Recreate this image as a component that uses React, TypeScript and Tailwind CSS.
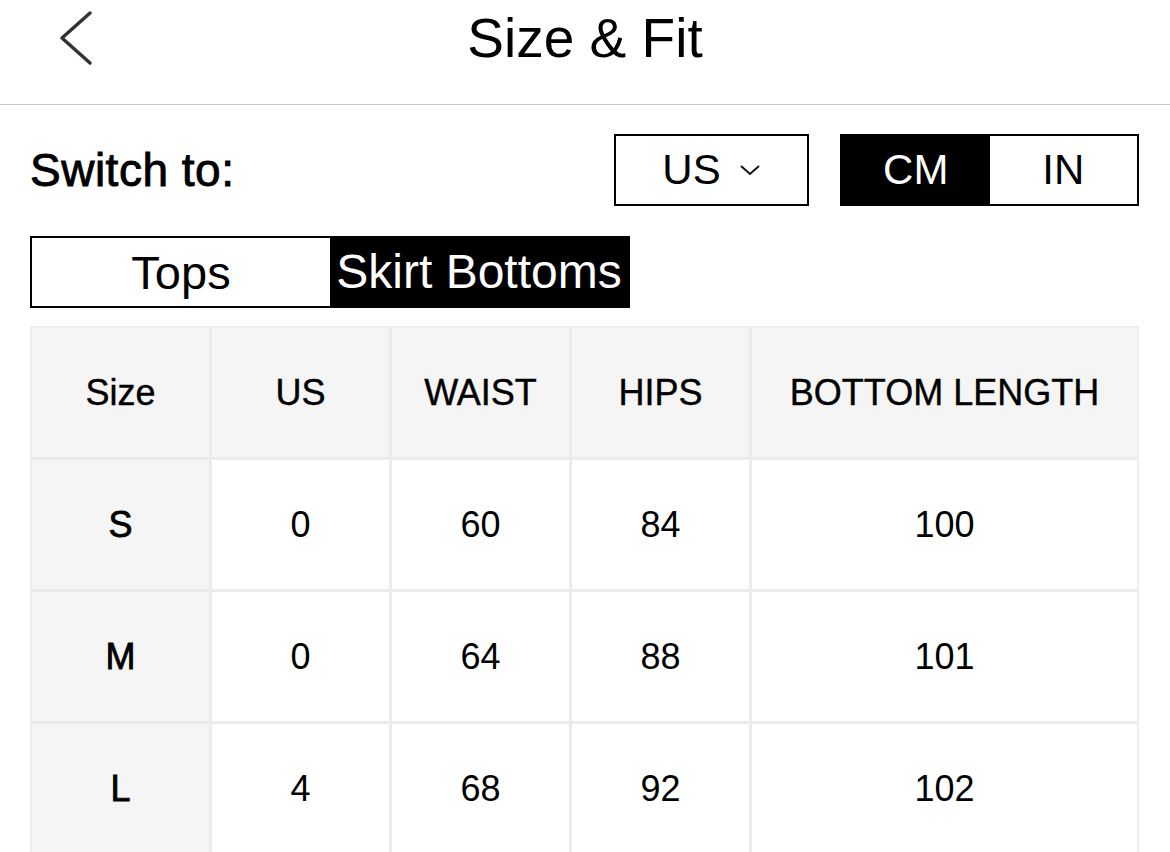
import { useState } from "react";

const rows = [
  { size: "S", us: "0", waist: "60", hips: "84", length: "100" },
  { size: "M", us: "0", waist: "64", hips: "88", length: "101" },
  { size: "L", us: "4", waist: "68", hips: "92", length: "102" },
];

const headers = ["Size", "US", "WAIST", "HIPS", "BOTTOM LENGTH"];

const App = () => {
  const [unit, setUnit] = useState<"CM" | "IN">("CM");
  const [tab, setTab] = useState<"tops" | "bottoms">("bottoms");

  return (
    <div
      className="w-[1170px] h-[852px] overflow-hidden bg-white text-black"
      style={{ fontFamily: '"Liberation Sans", Arial, sans-serif' }}
    >
      {/* header */}
      <div className="h-[105px] border-b border-[#c6c6c6] relative">
        <div className="h-[76px] flex items-center justify-center">
          <h1 className="text-[55px] leading-none font-normal">Size &amp; Fit</h1>
        </div>
        <button className="absolute left-[56px] top-[10px]">
          <svg width="40" height="56" viewBox="0 0 40 56" fill="none">
            <path
              d="M34 3 L6 28 L34 53"
              stroke="#333"
              strokeWidth="3.5"
              strokeLinecap="round"
              strokeLinejoin="round"
            />
          </svg>
        </button>
      </div>

      <div className="pl-[30px] pr-[31px]">
        {/* switch row */}
        <div className="mt-[29px] flex items-center h-[72px]">
          <span className="text-[46px] leading-none tracking-[0.5px] [-webkit-text-stroke:0.9px_black]">
            Switch to:
          </span>
          <div className="ml-auto flex gap-[31px]">
            <button className="w-[195px] h-[72px] border-2 border-black flex items-center justify-center gap-[18px]">
              <span className="text-[42px] leading-none">US</span>
              <svg width="22" height="14" viewBox="0 0 22 14" fill="none">
                <path d="M2 3 L11 11 L20 3" stroke="#111" strokeWidth="2" />
              </svg>
            </button>
            <div className="w-[299px] h-[72px] border-2 border-black flex">
              {(["CM", "IN"] as const).map((u) => (
                <button
                  key={u}
                  onClick={() => setUnit(u)}
                  className={
                    "flex-1 flex items-center justify-center text-[42px] leading-none " +
                    (unit === u ? "bg-black text-white" : "bg-white text-black")
                  }
                >
                  {u}
                </button>
              ))}
            </div>
          </div>
        </div>

        {/* tabs */}
        <div className="mt-[30px] w-[600px] h-[72px] border-2 border-black flex">
          <button
            onClick={() => setTab("tops")}
            className={
              "flex-1 flex items-center justify-center text-[47px] leading-none " +
              (tab === "tops" ? "bg-black text-white" : "bg-white text-black")
            }
          >
            Tops
          </button>
          <button
            onClick={() => setTab("bottoms")}
            className={
              "flex-1 flex items-center justify-center text-[48px] leading-none whitespace-nowrap " +
              (tab === "bottoms" ? "bg-black text-white" : "bg-white text-black")
            }
          >
            Skirt Bottoms
          </button>
        </div>

        {/* table */}
        <div className="mt-[18px] border-2 border-[#eeeeee] bg-[#ebebeb] grid grid-cols-[177px_177px_177px_177px_1fr] auto-rows-[129px] gap-[3px]">
          {headers.map((h) => (
            <div
              key={h}
              className="bg-[#f5f5f5] flex items-center justify-center text-[36px] leading-none [-webkit-text-stroke:0.4px_black]"
            >
              {h}
            </div>
          ))}
          {rows.map((r) => (
            <>
              <div
                key={r.size}
                className="bg-[#f5f5f5] flex items-center justify-center text-[36px] leading-none [-webkit-text-stroke:0.8px_black]"
              >
                {r.size}
              </div>
              <div className="bg-white flex items-center justify-center text-[36px] leading-none">
                {r.us}
              </div>
              <div className="bg-white flex items-center justify-center text-[36px] leading-none">
                {r.waist}
              </div>
              <div className="bg-white flex items-center justify-center text-[36px] leading-none">
                {r.hips}
              </div>
              <div className="bg-white flex items-center justify-center text-[36px] leading-none">
                {r.length}
              </div>
            </>
          ))}
        </div>
      </div>
    </div>
  );
};

export default App;
